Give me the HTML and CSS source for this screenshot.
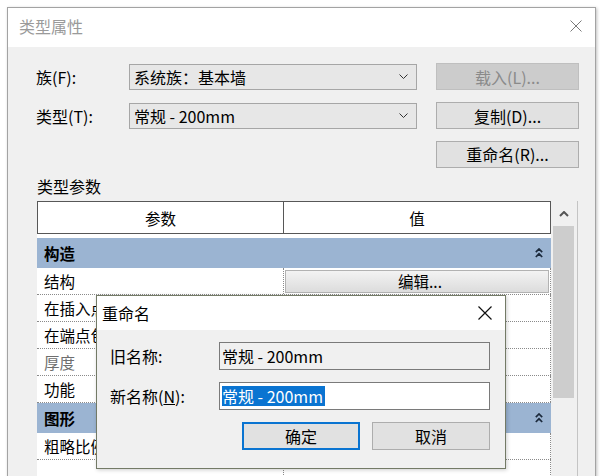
FILE: index.html
```html
<!DOCTYPE html>
<html lang="zh-CN">
<head>
  <meta charset="UTF-8">
  <title>类型属性</title>
  <link rel="stylesheet" href="styles.css">
</head>
<body>

<div class="window">
  <div class="titlebar">
    <span class="title">类型属性</span>
    <svg class="close" width="12" height="12" viewBox="0 0 12 12"><path d="M0.5 0.5L11.5 11.5M11.5 0.5L0.5 11.5" stroke="#7a7a7a" stroke-width="1" fill="none"/></svg>
  </div>

  <div class="content">
    <div class="row">
      <span class="label">族(F):</span>
      <div class="select">系统族：基本墙
        <svg width="9" height="5" viewBox="0 0 9 5"><path d="M0.5 0.5L4.5 4.5L8.5 0.5" stroke="#333" fill="none"/></svg>
      </div>
      <button class="btn" disabled>载入(L)...</button>
    </div>
    <div class="row">
      <span class="label">类型(T):</span>
      <div class="select">常规 - 200mm
        <svg width="9" height="5" viewBox="0 0 9 5"><path d="M0.5 0.5L4.5 4.5L8.5 0.5" stroke="#333" fill="none"/></svg>
      </div>
      <button class="btn">复制(D)...</button>
    </div>
    <div class="row end">
      <button class="btn">重命名(R)...</button>
    </div>

    <div class="section">类型参数</div>

    <div class="grid">
      <div class="grid-main">
        <div class="grid-head">
          <div>参数</div>
          <div>值</div>
        </div>
        <div class="grid-gap"></div>

        <div class="group">构造
          <svg width="8" height="10" viewBox="0 0 8 10"><path d="M0.8 4.2L4 1L7.2 4.2M0.8 9L4 5.8L7.2 9" stroke="#1c2a3c" stroke-width="1.7" fill="none"/></svg>
        </div>
        <div class="prop"><div class="name">结构</div><div class="val"><span class="edit">编辑...</span></div></div>
        <div class="prop"><div class="name">在插入点包络</div><div class="val"></div></div>
        <div class="prop"><div class="name">在端点包络</div><div class="val"></div></div>
        <div class="prop"><div class="name dim">厚度</div><div class="val"></div></div>
        <div class="prop"><div class="name">功能</div><div class="val"></div></div>

        <div class="group">图形
          <svg width="8" height="10" viewBox="0 0 8 10"><path d="M0.8 4.2L4 1L7.2 4.2M0.8 9L4 5.8L7.2 9" stroke="#1c2a3c" stroke-width="1.7" fill="none"/></svg>
        </div>
        <div class="prop"><div class="name">粗略比例填充样式</div><div class="val"></div></div>
        <div class="prop blank"><div class="name"></div><div class="val"></div></div>
      </div>

      <div class="scrollbar">
        <div class="arrow">
          <svg width="10" height="6" viewBox="0 0 10 6"><path d="M1 5L5 1L9 5" stroke="#555" stroke-width="2" fill="none"/></svg>
        </div>
        <div class="thumb"></div>
      </div>
    </div>
  </div>
</div>

<div class="dialog">
  <div class="titlebar dlg-title">
    <span>重命名</span>
    <svg width="14" height="14" viewBox="0 0 14 14"><path d="M0.5 0.5L13.5 13.5M13.5 0.5L0.5 13.5" stroke="#111" stroke-width="1.2" fill="none"/></svg>
  </div>
  <div class="dlg-body">
    <div class="field">
      <span class="flabel">旧名称:</span>
      <div class="input ro">常规 - 200mm</div>
    </div>
    <div class="field">
      <span class="flabel">新名称(<u>N</u>):</span>
      <div class="input"><span class="sel">常规 - 200mm</span></div>
    </div>
    <div class="actions">
      <button class="btn wide primary">确定</button>
      <button class="btn wide">取消</button>
    </div>
  </div>
</div>

</body>
</html>
```

FILE: styles.css
```css
body {
  margin: 0;
  background: #fff;
  font-family: "Noto Sans CJK SC", "Noto Sans", sans-serif;
  font-size: 16px;
  color: #000;
  overflow: hidden;
  height: 476px;
}
.window {
  margin: 7px 0 0 7px;
  width: 589px;
  height: 490px;
  box-sizing: border-box;
  border: 1px solid #a3a3a3;
  background: #f0f0f0;
  box-shadow: 1px 1px 3px rgba(0, 0, 0, 0.25);
}
.titlebar {
  height: 39px;
  background: #fff;
  display: flex;
  align-items: center;
  justify-content: space-between;
  padding: 0 13px 0 11px;
}
.title {
  color: #9a9a9a;
  font-size: 16px;
  margin-bottom: 3px;
}
.close {
  margin-bottom: 3px;
}
.content {
  padding: 16px 16px 0 28px;
}
.row {
  display: flex;
  align-items: center;
  height: 27px;
  margin-bottom: 12px;
}
.row.end {
  justify-content: flex-end;
  margin-top: -1px;
  height: 28px;
  margin-bottom: 0;
}
.label {
  width: 93px;
  line-height: 20px;
}
.select {
  width: 288px;
  height: 26px;
  box-sizing: border-box;
  border: 1px solid #a6a6a6;
  background: #e7e7e7;
  display: flex;
  align-items: center;
  justify-content: space-between;
  padding: 0 8px 0 4px;
  line-height: 20px;
}
.btn {
  margin-left: auto;
  width: 143px;
  height: 27px;
  box-sizing: border-box;
  border: 1px solid #adadad;
  background: #e1e1e1;
  font-family: inherit;
  font-size: 16px;
  color: #000;
  padding: 0;
  line-height: 20px;
}
.btn:disabled {
  background: #cccccc;
  border-color: #bfbfbf;
  color: #8a8a8a;
}
.section {
  line-height: 22px;
  margin: 7px 0 4px 1px;
}
.grid {
  display: flex;
  width: 540px;
  height: 300px;
  margin-left: 1px;
  border-right: 1px solid #c4c4c4;
}
.grid-main {
  width: 514px;
  background: #fff;
  font-size: 15.5px;
}
.grid-head {
  display: grid;
  grid-template-columns: 245px 1fr;
  height: 33px;
  box-sizing: border-box;
  border: 1px solid #575757;
}
.grid-head div {
  display: flex;
  align-items: center;
  justify-content: center;
}
.grid-head div + div {
  border-left: 1px solid #575757;
}
.grid-gap {
  height: 4px;
}
.group {
  height: 30px;
  background: #9bb4d2;
  font-weight: bold;
  display: flex;
  align-items: center;
  justify-content: space-between;
  padding: 0 8px 0 7px;
}
.prop {
  display: grid;
  grid-template-columns: 246px 1fr;
  height: 27px;
  box-sizing: border-box;
  border-bottom: 1px dotted #8a8a8a;
}
.prop.blank {
  border-bottom: none;
}
.prop .name {
  display: flex;
  align-items: center;
  padding-left: 7px;
  white-space: nowrap;
  overflow: hidden;
}
.prop .val {
  border-left: 1px dotted #8a8a8a;
  border-right: 1px dotted #8a8a8a;
  display: flex;
  align-items: center;
  padding: 0 1px;
}
.dim {
  color: #6e6e6e;
}
.edit {
  flex: 1;
  height: 23px;
  box-sizing: border-box;
  border: 1px solid #b2b2b2;
  background: linear-gradient(#f3f3f3, #dcdcdc);
  display: flex;
  align-items: center;
  justify-content: center;
  padding-left: 6px;
}
.scrollbar {
  width: 25px;
  background: #f0f0f0;
  display: flex;
  flex-direction: column;
  align-items: center;
}
.arrow {
  height: 25px;
  display: flex;
  align-items: center;
}
.thumb {
  width: 21px;
  height: 172px;
  background: #cdcdcd;
}
.dialog {
  position: absolute;
  left: 96px;
  top: 295px;
  width: 410px;
  height: 174px;
  box-sizing: border-box;
  border: 1px solid #737a66;
  background: #f0f0f0;
  box-shadow: 1px 1px 4px rgba(0, 0, 0, 0.2);
}
.dlg-title {
  height: 34px;
  padding: 0 13px 0 5px;
}
.dlg-body {
  padding: 12px 15px 0 13px;
}
.field {
  display: flex;
  align-items: center;
  margin-bottom: 12px;
}
.flabel {
  width: 109px;
  line-height: 20px;
}
.input {
  width: 271px;
  height: 28px;
  box-sizing: border-box;
  border: 1px solid #7a7a7a;
  background: #fff;
  display: flex;
  align-items: center;
  padding-left: 2px;
  line-height: 20px;
}
.input.ro {
  background: #f0f0f0;
}
.sel {
  background: #0a74d1;
  color: #fff;
  padding-right: 2px;
}
.actions {
  display: flex;
  justify-content: flex-end;
  gap: 12px;
  margin-top: 4px;
}
.btn.wide {
  margin-left: 0;
  width: 118px;
  height: 28px;
}
.btn.primary {
  border: 2px solid #0a74d1;
}
```
